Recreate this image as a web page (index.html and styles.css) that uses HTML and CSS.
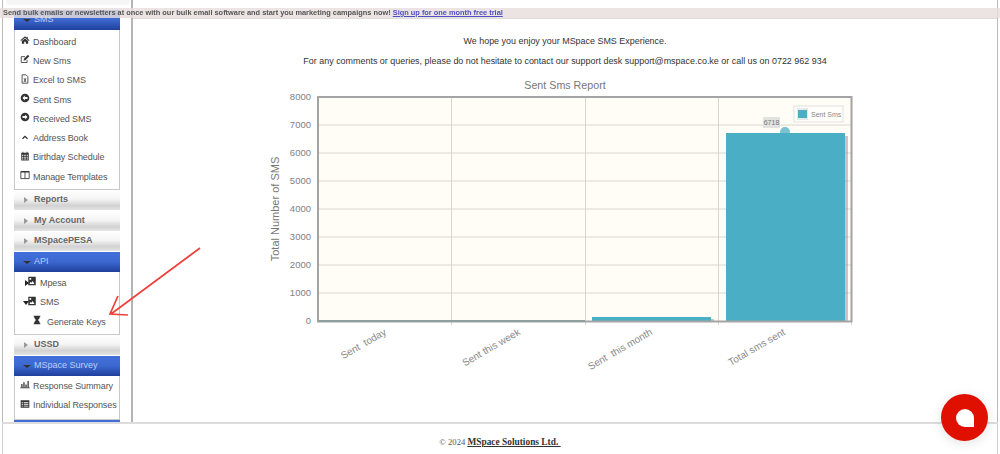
FILE: index.html
```html
<!DOCTYPE html>
<html lang="en">
<head>
<meta charset="utf-8">
<title>MSpace SMS</title>
<link rel="stylesheet" href="styles.css">
</head>
<body>
<div class="banner">Send bulk emails or newsletters at once with our bulk email software and start you marketing campaigns now! <a href="#">Sign up for one month free trial</a></div>

<div class="layout">
  <aside class="side">
    <div class="stub"></div>
    <div class="head open"><span class="caret"></span>SMS</div>
    <ul class="panel first">
      <li><svg class="ico" viewBox="0 0 12 12"><path d="M6 1.500 .5 6.300l.8.8L6 3.200l4.700 3.900.8-.8L9.300 4.400V2H8v1.300zM2.200 7.200V10.500H5V8h2v2.500h2.800V7.200L6 4.200z"/></svg>Dashboard</li>
      <li><svg class="ico" viewBox="0 0 12 12"><path class="ln" d="M8.500 7v3.200H1.500V3.200h4.500"/><path d="M4.300 7.800 4.700 5.700 9.500 1l1.700 1.700-4.800 4.700z"/></svg>New Sms</li>
      <li><svg class="ico" viewBox="0 0 12 12"><path class="ln" d="M2.500 1h4.700l2.300 2.300v7.700h-7z"/><path d="M4.200 5h1l.8 1.300L6.800 5h1L6.500 7.200 7.800 9.500h-1L6 8.100 5.200 9.500h-1l1.300-2.300z"/></svg>Excel to SMS</li>
      <li><svg class="ico" viewBox="0 0 12 12"><path fill-rule="evenodd" d="M6 .8a5.200 5.200 0 1 0 0 10.400A5.200 5.200 0 0 0 6 .8zM6.200 3 9 6 6.200 9V7.200H3V4.800h3.200z" transform="rotate(180 6 6)"/></svg>Sent Sms</li>
      <li><svg class="ico" viewBox="0 0 12 12"><path fill-rule="evenodd" d="M6 .8a5.200 5.200 0 1 0 0 10.400A5.200 5.200 0 0 0 6 .8zM6.200 3 9 6 6.200 9V7.200H3V4.800h3.200z"/></svg>Received SMS</li>
      <li><svg class="ico" viewBox="0 0 12 12"><path class="ln thick" d="M3 8 6 5.200 9 8"/></svg>Address Book</li>
      <li><svg class="ico" viewBox="0 0 12 12"><path fill-rule="evenodd" d="M1.500 2H3V1h1v1h4V1h1v1h1.500v9.500h-9zM2.500 4.500v1.300h1.500V4.500zM5 4.500v1.300h2V4.500zM8 4.500v1.300h1.500V4.500zM2.500 6.800v1.200h1.500V6.800zM5 6.800v1.200h2V6.800zM8 6.800v1.200h1.500V6.800zM2.500 9v1.300h1.500V9zM5 9v1.300h2V9zM8 9v1.300h1.500V9z"/></svg>Birthday Schedule</li>
      <li><svg class="ico" viewBox="0 0 12 12"><path class="ln" d="M1 1.800h10v8.500H1zM6 1.800v8.500"/><path d="M1 1.500h10v1.500H1z"/></svg>Manage Templates</li>
    </ul>
    <div class="head"><span class="caret"></span>Reports</div>
    <div class="head"><span class="caret"></span>My Account</div>
    <div class="head"><span class="caret"></span>MSpacePESA</div>
    <div class="head open"><span class="caret"></span>API</div>
    <ul class="panel tree">
      <li class="branch"><span class="tri right"></span><svg class="ico" viewBox="0 0 12 12"><path fill-rule="evenodd" d="M1.500 1h9v10h-9zM3 9.500h6L6.800 6 5.300 8 4.300 7zM3 2.500v2h2v-2z"/></svg>Mpesa</li>
      <li class="branch"><span class="tri down"></span><svg class="ico" viewBox="0 0 12 12"><path fill-rule="evenodd" d="M1.500 1h9v10h-9zM3 9.500h6L6.800 6 5.300 8 4.300 7zM3 2.500v2h2v-2z"/></svg>SMS</li>
      <li class="leaf"><svg class="ico" viewBox="0 0 12 12"><path d="M2 .8h8V2H9.300c0 2-1.100 3.200-2.300 4 1.200.8 2.300 2 2.300 4H10v1.200H2V10h.7c0-2 1.100-3.200 2.300-4C3.800 5.200 2.700 4 2.700 2H2z"/></svg>Generate Keys</li>
    </ul>
    <div class="head"><span class="caret"></span>USSD</div>
    <div class="head open"><span class="caret"></span>MSpace Survey</div>
    <ul class="panel last">
      <li><svg class="ico" viewBox="0 0 12 12"><path d="M.5 10h11v1H.5zM1.500 6h1.500v3.500H1.500zM4 4h1.500v5.500H4zM6.500 6.500H8v3H6.500zM9 2.500h1.500v7H9z"/></svg>Response Summary</li>
      <li><svg class="ico" viewBox="0 0 12 12"><path fill-rule="evenodd" d="M.8 1.500h10.400v9H.8zM2 4v1h1.500V4zM4.500 4v1h5.500V4zM2 6v1h1.500V6zM4.500 6v1h5.500V6zM2 8v1h1.500V8zM4.500 8v1h5.500V8z"/></svg>Individual Responses</li>
    </ul>
    <div class="head open"></div>
  </aside>

  <main class="main">
    <p class="lead">We hope you enjoy your MSpace SMS Experience.</p>
    <p class="lead">For any comments or queries, please do not hesitate to contact our support desk support@mspace.co.ke or call us on 0722 962 934</p>
    <svg class="chart" viewBox="255 74 620 316" width="620" height="316">
      <text class="title" x="565" y="89">Sent Sms Report</text>
      <rect class="plot" x="318" y="97" width="533" height="224"/>
      <g class="grid">
        <path d="M318 125H851M318 153H851M318 181H851M318 209H851M318 237H851M318 265H851M318 293H851"/>
        <path d="M451.500 97V325M585.500 97V325M718.500 97V325M851.500 321V325"/>
      </g>
      <g class="ticks">
        <text x="311" y="100">8000</text>
        <text x="311" y="128">7000</text>
        <text x="311" y="156">6000</text>
        <text x="311" y="184">5000</text>
        <text x="311" y="212">4000</text>
        <text x="311" y="240">3000</text>
        <text x="311" y="268">2000</text>
        <text x="311" y="296">1000</text>
        <text x="311" y="324">0</text>
      </g>
      <text class="ylabel" transform="translate(279 209) rotate(-90)">Total Number of SMS</text>
      <rect class="shadow" x="729" y="136" width="119" height="185"/>
      <rect class="shadow" x="595" y="319" width="119" height="2"/>
      <rect class="bar" x="592" y="317" width="119" height="4"/>
      <circle class="point" cx="785" cy="132" r="5"/>
      <rect class="bar" x="726" y="133" width="119" height="188"/>
      <path class="frame" d="M318 97H851.500V321.500H318z"/>
      <path class="baseline" d="M318 321H585"/>
      <rect class="tip" x="763" y="117" width="17" height="11"/>
      <text class="tiptext" x="771.500" y="125">6718</text>
      <rect class="legend" x="794" y="106" width="49" height="16"/>
      <rect class="swatch-bg" x="797" y="108" width="11" height="12"/>
      <rect class="bar" x="798" y="110" width="9" height="8"/>
      <text class="legtext" x="811" y="116.500">Sent Sms</text>
      <g class="xlabels">
        <text transform="translate(387 334) rotate(-30)">Sent  today</text>
        <text transform="translate(521 334) rotate(-30)">Sent this week</text>
        <text transform="translate(653 334) rotate(-30)">Sent  this month</text>
        <text transform="translate(786 334) rotate(-30)">Total sms sent</text>
      </g>
    </svg>
  </main>
</div>

<footer class="foot">© 2024 <a href="#">MSpace Solutions Ltd.&nbsp;</a></footer>

<svg class="arrow" viewBox="0 0 100 80" width="100" height="80"><path d="M92 4 3 70M10 52 2 70 20 71"/></svg>
<div class="chat"><span class="bubble"></span></div>
</body>
</html>
```

FILE: styles.css
```css
* { box-sizing: border-box; }
html, body { margin: 0; height: 454px; overflow: hidden; background: #fff; }
body { font-family: "Liberation Sans", Arial, sans-serif; color: #333; padding-left: 2px; padding-right: 2px; }

.banner {
  position: fixed; top: 8px; left: 0; right: 0; height: 10px;
  background: rgba(230, 222, 220, .82);
  font-size: 7.400px; font-weight: bold; line-height: 10px; color: #555;
  padding-left: 3px; white-space: nowrap; z-index: 5;
}
.banner a { color: #4f4fc4; }

.layout { display: flex; height: 422px; overflow: hidden; border-left: 1px solid #bbb; border-right: 1px solid #bbb; }
.side { width: 130px; flex: none; padding: 0 11px; border-right: 2px solid #b4b4b4; overflow: hidden; }
.stub { height: 5px; margin: 0 0 5px -8px; width: 124px; background: #f5f5f5; border-radius: 0 0 4px 4px; }

.head {
  height: 20px; font-size: 9px; font-weight: bold; line-height: 19px; color: #666; padding-left: 20px;
  position: relative; border-radius: 3px 3px 0 0; margin-bottom: .7px;
  background: linear-gradient(#fff 0, #f5f5f5 45%, #d2d2d2 78%, #e4e4e4 100%);
}
.head.open {
  color: #bccdf5; font-weight: normal; margin-bottom: 0; border-radius: 0;
  background: linear-gradient(#4270db 0, #3b67cf 50%, #1f3f9d 100%);
}
.caret { position: absolute; left: 10px; top: 7px; border-left: 4px solid #999; border-top: 3px solid transparent; border-bottom: 3px solid transparent; }
.open .caret { left: 9px; top: 9px; border: 3px solid transparent; border-top: 3px solid #333; border-bottom: 0; border-left-width: 4px; border-right-width: 4px; }

.panel { list-style: none; margin: 0; padding: 0 0 1.500px; border: 1px solid #c8c8c8; border-top: 0; background: #fff; }
.panel.first { padding-top: 2px; padding-bottom: 2.500px; }
.panel.last { padding-bottom: 4px; }
.panel li {
  height: 19.300px; display: flex; align-items: center; font-size: 9px; color: #555; padding-left: 5px; white-space: nowrap; letter-spacing: -.1px;
}
.ico { width: 10px; height: 10px; flex: none; margin-right: 3px; margin-top: -3px; fill: #333; }
.ln { fill: none; stroke: #333; stroke-width: 1; }
.ln.thick { stroke-width: 1.600; }

.tree { padding: 1px 0 3px; }
.tree li { height: 19.500px; }
.branch { padding-left: 12px !important; position: relative; }
.branch .ico { margin-right: 3px; }
.leaf { padding-left: 17px !important; }
.leaf .ico { margin-right: 5px; }
.tri { position: absolute; }
.tri.right { left: 10px; top: 7px; border-left: 4px solid #222; border-top: 3px solid transparent; border-bottom: 3px solid transparent; }
.tri.down { left: 8px; top: 9px; border-top: 4px solid #222; border-left: 3px solid transparent; border-right: 3px solid transparent; }

.main { flex: 1; min-width: 0; border-top: 1px solid #ddd; margin-top: 18px; padding-top: 16px; text-align: center; }
.lead { margin: 0 0 7px; font-size: 8.950px; line-height: 13px; color: #333; }
.chart { display: block; margin: -1px auto 0; }
.chart text { font-family: "Liberation Sans", Arial, sans-serif; }

.title { font-size: 10.700px; fill: #777; text-anchor: middle; }
.plot { fill: #fffdf6; }
.grid path { fill: none; stroke: #d9d6cf; stroke-width: 1; }
.ticks text { font-size: 9.500px; fill: #808080; text-anchor: end; }
.ylabel { font-size: 11px; fill: #777; text-anchor: middle; }
.shadow { fill: #999; opacity: .55; }
.bar { fill: #4aaec4; }
.point { fill: #79c3d3; }
.frame { fill: none; stroke: #a4a4a4; stroke-width: 2; }
.baseline { fill: none; stroke: #8f9f9f; stroke-width: 2; }
.tip { fill: #e2e2e2; }
.tiptext { font-size: 7px; fill: #777; text-anchor: middle; }
.legend { fill: #fffefb; stroke: #e2e2e2; stroke-width: 1; }
.swatch-bg { fill: #e8e8e8; }
.legtext { font-size: 7px; fill: #888; }
.xlabels text { font-size: 10px; fill: #8a8a8a; text-anchor: end; white-space: pre; }

.foot {
  height: 32px; border: 1px solid #ccc; border-top-width: 2px; border-top-color: #ddd; border-bottom: 0;
  text-align: center; padding-top: 13px; font-family: "Liberation Serif", serif; font-size: 8.600px; color: #555;
}
.foot a { font-size: 9.400px; font-weight: bold; color: #333; }

.arrow { position: fixed; left: 108px; top: 244px; }
.arrow path { fill: none; stroke: #f0403a; stroke-width: 1.700; }

.chat {
  position: fixed; left: 941px; top: 394px; width: 47px; height: 47px; border-radius: 50%;
  background: #e01000; box-shadow: 0 2px 12px rgba(0, 0, 0, .12);
  display: flex; align-items: center; justify-content: center;
}
.bubble { width: 18px; height: 18px; background: #fff; border-radius: 50% 50% 0 50%; }
```
